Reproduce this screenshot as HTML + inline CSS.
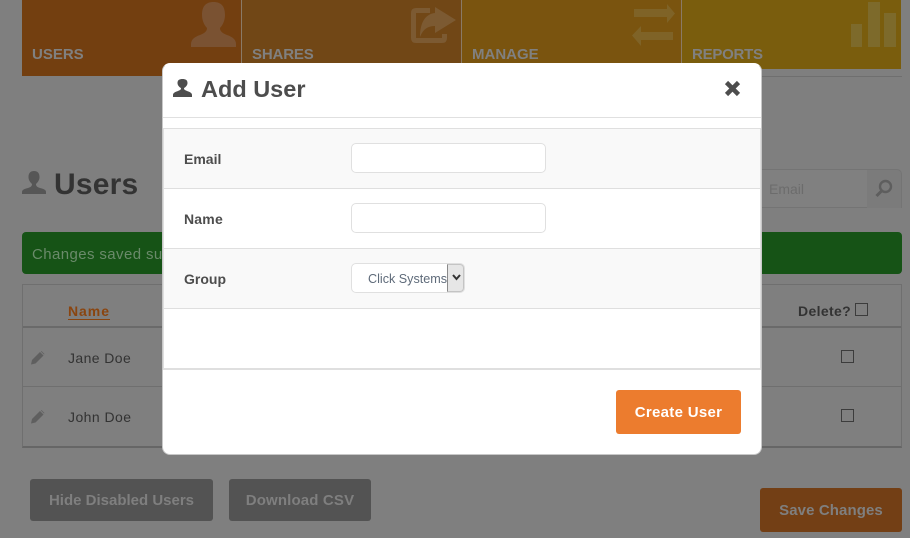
<!DOCTYPE html>
<html><head><meta charset="utf-8"><style>
html,body{margin:0;padding:0;width:910px;height:538px;overflow:hidden;background:#7f7f7f}
body{position:relative;font-family:"Liberation Sans",sans-serif}
.a{position:absolute;box-sizing:border-box;white-space:nowrap}
.tile{top:0;height:69px}
.tl{font-size:15px;font-weight:bold;color:#808080;top:46px;line-height:18px}
.gb{background:#535353;border-radius:3px;color:#7f7f7f;font-weight:bold;font-size:15px;text-align:center;height:42px;line-height:44px}
.cb{width:13px;height:13px;border:1px solid #3c3c3c}
.row{left:164px;width:596px;height:60px;border-bottom:1px solid #dfdfdf}
.lab{left:184px;font-size:14px;font-weight:bold;color:#4d4d4d;line-height:16px}
.inp{left:351px;width:195px;height:30px;background:#fff;border:1px solid #e0e0e0;border-radius:5px}
</style></head><body>
<div class="a tile" style="left:22px;width:219px;height:76px;background:#733f10"></div>
<div class="a tile" style="left:242px;width:219px;background:#714716"></div>
<div class="a tile" style="left:462px;width:219px;background:#7a540f"></div>
<div class="a tile" style="left:682px;width:219px;background:#7a5d0d"></div>
<div class="a" style="left:241px;top:0;width:1px;height:63px;background:#8a7a66"></div>
<div class="a" style="left:461px;top:0;width:1px;height:63px;background:#8a7a66"></div>
<div class="a" style="left:681px;top:0;width:1px;height:63px;background:#8a7a66"></div>
<div class="a" style="left:682px;top:76px;width:220px;height:1px;background:#6f6f6f"></div>
<svg class="a" style="left:0;top:0" width="910" height="70" viewBox="0 0 910 70">
<path fill="#7a5232" d="M191 47v-3c0-4 3-7 9-9 5-2 7-4 7-7-3-3-5-8-5-13 0-9 4-13 11.500-13S225 6 225 15c0 5-2 10-5 13 0 3 2 5 7 7 6 2 9 5 9 9v3z"/>
<path fill="none" stroke="#7c5a32" stroke-width="5" stroke-linejoin="round" d="M444.500 34v4c0 2-1 2.500-2.500 2.500h-26c-2 0-2.500-1-2.500-2.500V13c0-2 1-2.500 2.500-2.500h14"/>
<path fill="#7c5a32" d="M435 7l21 13-21 13v-7c-7 0-12 3-15 11 0-14 5-23 15-24z"/>
<path fill="#7f6327" d="M634 9h33V4l8 9.500-8 9.500v-6h-33zM632 35.500l9-9.500v6h32v8h-32v6z"/>
<rect x="851" y="24" width="11" height="23" fill="#7d6a2b"/><rect x="868" y="2" width="12" height="45" fill="#7d6a2b"/><rect x="884" y="13" width="12" height="34" fill="#7d6a2b"/>
</svg>
<div class="a tl" style="left:32px">USERS</div>
<div class="a tl" style="left:252px;letter-spacing:-.15px">SHARES</div>
<div class="a tl" style="left:472px">MANAGE</div>
<div class="a tl" style="left:692px;letter-spacing:-.25px">REPORTS</div>

<svg class="a" style="left:22px;top:171px" width="24" height="24" viewBox="0 0 24 24"><path fill="#565656" d="M0 23v-2c0-2 2-3 6-4 3-1 4-2 4-4-2-2-3.500-4-3.500-7C6.500 2 8.500 0 12 0s5.500 2 5.500 6c0 3-1.500 5-3.500 7 0 2 1 3 4 4 4 1 6 2 6 4v2z"/></svg>
<div class="a" style="left:54px;top:167px;font-size:30px;font-weight:bold;color:#333;line-height:36px;letter-spacing:.2px">Users</div>

<div class="a" style="left:740px;top:169px;width:127px;height:39px;background:#808080;border-bottom:1px solid #747474;border-top:1px solid #747474"></div>
<div class="a" style="left:867px;top:169px;width:35px;height:39px;background:#7b7b7b;border-top:1px solid #747474;border-right:1px solid #747474;border-radius:0 5px 0 0"></div>
<div class="a" style="left:769px;top:181px;font-size:14px;color:#6c6c6c;line-height:17px">Email</div>
<svg class="a" style="left:874px;top:179px" width="20" height="20" viewBox="0 0 20 20"><circle cx="11.500" cy="7.500" r="5.500" fill="none" stroke="#5e5e5e" stroke-width="2.400"/><path d="M7.500 12l-5 5" stroke="#5e5e5e" stroke-width="3"/></svg>

<div class="a" style="left:22px;top:232px;width:880px;height:42px;background:#165316;border-radius:4px"></div>
<div class="a" style="left:32px;top:246px;font-size:15px;color:#6a8a6a;line-height:18px;letter-spacing:.4px">Changes saved successfully</div>

<div class="a" style="left:22px;top:284px;width:880px;height:164px;border:1px solid #6f6f6f;border-bottom:2px solid #666"></div>
<div class="a" style="left:23px;top:326px;width:878px;height:2px;background:#6a6a6a"></div>
<div class="a" style="left:23px;top:386px;width:878px;height:1px;background:#6f6f6f"></div>
<div class="a" style="left:68px;top:303px;font-size:14px;font-weight:bold;color:#8a4510;line-height:16px;border-bottom:1px solid #8a4510;letter-spacing:.95px">Name</div>
<div class="a" style="left:68px;top:350px;font-size:14px;color:#333;line-height:16px;letter-spacing:.4px">Jane Doe</div>
<div class="a" style="left:68px;top:409px;font-size:14px;color:#333;line-height:16px;letter-spacing:.45px">John Doe</div>
<svg class="a" style="left:30px;top:351px" width="15" height="14" viewBox="0 0 15 14"><path fill="#5f5f5f" d="M1 13.500l1-4.500 8-8 3.500 3.500-8 8zM11 .5l.5-.5 3 3-.5.5z"/></svg>
<svg class="a" style="left:30px;top:410px" width="15" height="14" viewBox="0 0 15 14"><path fill="#5f5f5f" d="M1 13.500l1-4.500 8-8 3.500 3.500-8 8zM11 .5l.5-.5 3 3-.5.5z"/></svg>
<div class="a" style="left:798px;top:303px;font-size:14px;font-weight:bold;color:#333;line-height:16px;letter-spacing:.35px">Delete?</div>
<div class="a cb" style="left:855px;top:303px"></div>
<div class="a cb" style="left:841px;top:350px"></div>
<div class="a cb" style="left:841px;top:409px"></div>

<div class="a gb" style="left:30px;top:479px;width:183px">Hide Disabled Users</div>
<div class="a gb" style="left:229px;top:479px;width:142px;letter-spacing:.15px">Download CSV</div>
<div class="a gb" style="left:760px;top:488px;width:142px;height:44px;line-height:46px;background:#733f15;color:#7f7f7f;letter-spacing:.1px">Save Changes</div>

<div class="a" style="left:162px;top:63px;width:600px;height:392px;background:#fff;border:1px solid #c8c8c8;border-radius:8px;border-top-color:#fff"></div>
<svg class="a" style="left:173px;top:79px" width="19" height="18" viewBox="0 0 19 18"><path fill="#4d4d4d" d="M0 18v-2c0-2 2-3 5-4 2-1 3-1 3-3-2-1-3.500-3-3.500-5 0-3 2-4 5-4s5 1 5 4c0 2-1.500 4-3.500 5 0 2 1 2 3 3 3 1 5 2 5 4v2z"/></svg>
<div class="a" style="left:201px;top:75px;font-size:23.500px;font-weight:bold;color:#4d4d4d;line-height:28px">Add User</div>
<svg class="a" style="left:724px;top:80px" width="17" height="17" viewBox="0 0 17 17"><path d="M2.500 2.500l12 12M14.500 2.500l-12 12" stroke="#4d4d4d" stroke-width="4.500"/></svg>
<div class="a" style="left:163px;top:117px;width:598px;height:1px;background:#e0e0e0"></div>
<div class="a" style="left:163px;top:128px;width:598px;height:242px;border:1px solid #dfdfdf;border-bottom:2px solid #dfdfdf"></div>
<div class="a row" style="top:129px;background:#f9f9f9"></div>
<div class="a row" style="top:189px;background:#fff"></div>
<div class="a row" style="top:249px;background:#f9f9f9"></div>
<div class="a lab" style="top:151px">Email</div>
<div class="a lab" style="top:211px;letter-spacing:.2px">Name</div>
<div class="a lab" style="top:271px">Group</div>
<div class="a inp" style="top:143px"></div>
<div class="a inp" style="top:203px"></div>
<div class="a" style="left:351px;top:263px;width:114px;height:30px;background:#fff;border:1px solid #e0e0e0;border-radius:5px"></div>
<div class="a" style="left:368px;top:272px;font-size:12.600px;color:#5f6b7a;line-height:15px">Click Systems</div>
<div class="a" style="left:447px;top:264px;width:17px;height:28px;background:#e6e6e6;border:1px solid #c4c4c4;border-left-color:#8a8a8a;border-radius:0 4px 4px 0"></div>
<svg class="a" style="left:452px;top:274px" width="9" height="7" viewBox="0 0 9 7"><path d="M1 1l3.500 4L8 1" fill="none" stroke="#333" stroke-width="2"/></svg>
<div class="a" style="left:616px;top:390px;width:125px;height:44px;background:#ec7c2e;border-radius:3px;color:#fff;font-weight:bold;font-size:15px;text-align:center;line-height:46px;letter-spacing:.3px">Create User</div>
</body></html>
